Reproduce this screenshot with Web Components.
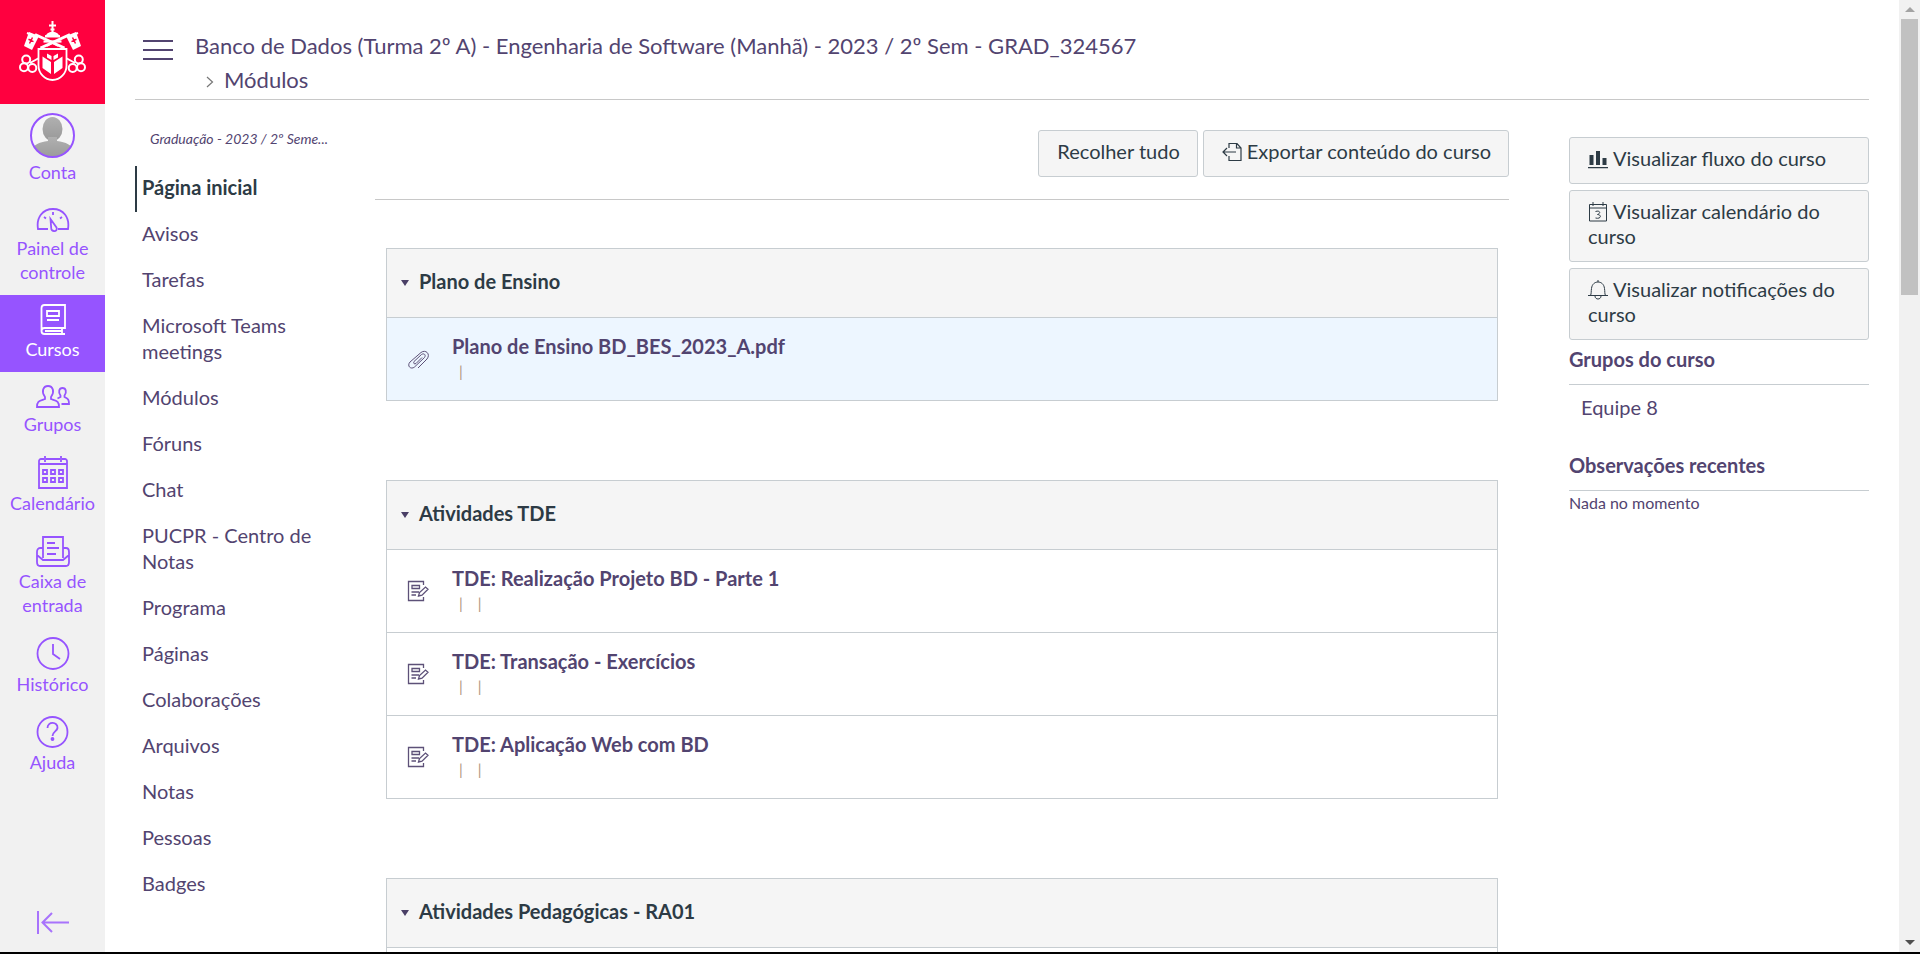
<!DOCTYPE html>
<html lang="pt-BR">
<head>
<meta charset="utf-8">
<title>Banco de Dados: Módulos</title>
<style>
  :root {
    --brand: #9654ff;
    --link: #524470;
    --ink: #2d3b45;
    --line: #c7cdd1;
    --panel: #f5f5f5;
  }
  html, body { margin: 0; height: 100%; overflow: hidden; background: #fff; }
  body { font-family: Lato, "Liberation Sans", sans-serif; font-size: 20px; line-height: 24px; color: var(--ink); }
</style>
</head>
<body>
<course-app></course-app>

<template id="t-app">
  <style>
    :host { display: flex; height: 100vh; box-sizing: border-box; border-bottom: 2px solid #000; overflow: hidden; }
    main { flex: 1; min-width: 0; padding: 0 30px; overflow: hidden; }
    .body { display: grid; grid-template-columns: 210px minmax(0, 1fr) 300px; }
    .content { margin: 30px 60px 0 30px; }
    .toolbar { display: flex; justify-content: flex-end; gap: 5px; padding-bottom: 22px; border-bottom: 1px solid #c8c8c8; }
    .modules { display: flex; flex-direction: column; gap: 79px; padding: 48px 11px 0; }
  </style>
  <global-nav></global-nav>
  <main>
    <course-header></course-header>
    <div class="body">
      <course-menu></course-menu>
      <div class="content">
        <div class="toolbar">
          <canvas-button>Recolher tudo</canvas-button>
          <canvas-button icon="export">Exportar conteúdo do curso</canvas-button>
        </div>
        <div class="modules">
          <course-module name="Plano de Ensino">
            <module-item icon="clip" marks="1" selected>Plano de Ensino BD_BES_2023_A.pdf</module-item>
          </course-module>
          <course-module name="Atividades TDE">
            <module-item icon="task" marks="2">TDE: Realização Projeto BD - Parte 1</module-item>
            <module-item icon="task" marks="2">TDE: Transação - Exercícios</module-item>
            <module-item icon="task" marks="2">TDE: Aplicação Web com BD</module-item>
          </course-module>
          <course-module name="Atividades Pedagógicas - RA01">
            <module-item icon="task" marks="0"></module-item>
          </course-module>
        </div>
      </div>
      <course-aside></course-aside>
    </div>
  </main>
  <page-scrollbar></page-scrollbar>
</template>

<template id="t-nav">
  <style>
    :host { display: flex; flex-direction: column; flex: none; width: 105px; background: #f1f1f1; color: var(--brand); }
    .logo { display: block; background: #ff003f; height: 104px; }
    .logo svg { display: block; }
    ul { list-style: none; margin: 0; padding: 0; flex: 1; }
    .fold { border: 0; background: none; padding: 0; margin-bottom: 16px; color: var(--brand); opacity: .8; }
    .fold svg { display: block; margin: 0 auto; fill: none; stroke: currentColor; stroke-width: 2; }
  </style>
  <a class="logo" href="#" aria-label="PUCPR">
    <svg width="105" height="104" viewBox="0 0 105 104" fill="none" stroke="#fff">
      <path d="M52.500 21v11M49 25.500h7M50.500 29.500h4" stroke-width="2"/>
      <path d="M46 36q0-3.500 6.500-4.500 6.500 1 6.500 4.500zM44.500 36.500h16" fill="#fff" stroke="none"/>
      <path d="M45 36.300h15" stroke-width="2.400"/>
      <path d="M35 34.500L64.500 48M70 34.500L40.500 48" stroke-width="3"/>
      <path d="M43.500 41.500L61.500 41.500" stroke-width="2.200"/>
      <path d="M47 46l5.500-3 5.500 3" stroke-width="1.500"/>
      <g fill="#fff" stroke="none">
        <path d="M29 32l10 4-7 14-8-4z"/><path d="M76 32l-10 4 7 14 8-4z"/>
      </g>
      <path d="M27 33l9 3.500M78 33l-9 3.500" stroke-width="2"/>
      <g stroke="#ff003f" stroke-width="1.500">
        <path d="M32.500 37.500l-3 6M28.500 39.300l5 2.300M72.500 37.500l3 6M76.500 39.300l-5 2.300"/>
      </g>
      <g stroke-width="2">
        <circle cx="26.200" cy="59.500" r="4"/><circle cx="24" cy="67.200" r="4"/><circle cx="32.300" cy="68" r="4"/>
        <circle cx="78.800" cy="59.500" r="4"/><circle cx="81" cy="67.200" r="4"/><circle cx="72.700" cy="68" r="4"/>
        <path d="M30 63l9-5M75 63l-9-5"/>
      </g>
      <path d="M38.500 49h28v16.500a14 14.500 0 0 1-28 0z" fill="#ff003f" stroke-width="1.800"/>
      <path d="M42.500 56.500l8.500 5.500v12l-8.500-6zM62.500 56.500L54 62v12l8.500-6zM47 53.500l4.500 2.500v4l-4.500-2.500zM58 53.500L53.500 56v4l4.500-2.500z" fill="#fff" stroke="none"/>
    </svg>
  </a>
  <ul>
    <nav-item icon="user">Conta</nav-item>
    <nav-item icon="gauge">Painel de controle</nav-item>
    <nav-item icon="book" active>Cursos</nav-item>
    <nav-item icon="people">Grupos</nav-item>
    <nav-item icon="calendar">Calendário</nav-item>
    <nav-item icon="inbox">Caixa de entrada</nav-item>
    <nav-item icon="clock">Histórico</nav-item>
    <nav-item icon="help">Ajuda</nav-item>
  </ul>
  <button class="fold" type="button" aria-label="Minimizar navegação">
    <svg width="34" height="26" viewBox="0 0 34 26"><path d="M2 1v23M6.500 12.500H33M16 3l-9.500 9.500L16 22"/></svg>
  </button>
</template>

<template id="t-nav-item">
  <style>
    :host { display: block; }
    a { display: block; padding: 9px 8px 11px; text-align: center; font-size: 18px; line-height: 24px; color: inherit; text-decoration: none; }
    :host([active]) a { background: var(--brand); color: #fff; }
    svg { display: block; margin: 0 auto 2px; fill: none; stroke: currentColor; stroke-width: 1.800; }
  </style>
  <a href="#"><span class="icon"></span><slot></slot></a>
</template>

<template id="t-header">
  <style>
    :host { display: flex; align-items: flex-start; padding: 29px 0 2px 7px; border-bottom: 1px solid #c8c8c8; }
    button { border: 0; background: none; padding: 10px 0 0; margin-right: 21px; }
    button svg { display: block; }
    ol { list-style: none; margin: 0; padding: 0; font-size: 22px; line-height: 34px; }
    li { display: flex; align-items: center; }
    li svg { margin: 4px 10px 0 11px; }
    a { color: var(--link); text-decoration: none; }
  </style>
  <button type="button" aria-label="Alternar menu do curso">
    <svg width="32" height="24" viewBox="0 0 32 24" fill="none" stroke="#524470" stroke-width="2"><path d="M1 2h30M1 11h30M1 20h30"/></svg>
  </button>
  <nav aria-label="Trilha">
    <ol>
      <li><a href="#">Banco de Dados (Turma 2º A) - Engenharia de Software (Manhã) - 2023 / 2º Sem - GRAD_324567</a></li>
      <li><svg width="8" height="12" viewBox="0 0 8 12" fill="none" stroke="#777" stroke-width="1.200"><path d="M1 1l5.500 5L1 11"/></svg><a href="#">Módulos</a></li>
    </ol>
  </nav>
</template>

<template id="t-menu">
  <style>
    :host { display: block; padding-top: 30px; }
    p { margin: 0 0 18px 15px; font-size: 14px; line-height: 18px; font-style: italic; color: var(--link); }
    ul { list-style: none; margin: 0; padding: 0; }
    a { display: block; padding: 8px 5px 12px; border-left: 2px solid transparent; line-height: 26px; color: var(--link); text-decoration: none; }
    a.on { color: var(--ink); font-weight: 700; border-color: var(--ink); }
  </style>
  <p>Graduação - 2023 / 2º Seme...</p>
  <nav aria-label="Curso"><ul></ul></nav>
</template>

<template id="t-button">
  <style>
    :host { display: block; }
    button { display: block; width: 100%; padding: 8px 17px 12px 18px; font: inherit; line-height: 25px; text-align: left; color: var(--ink); background: var(--panel); border: 1px solid var(--line); border-radius: 3px; }
    svg { width: 20px; height: 20px; vertical-align: -3px; margin-right: 5px; fill: none; stroke: currentColor; }
  </style>
  <button type="button"><span class="icon"></span><slot></slot></button>
</template>

<template id="t-module">
  <style>
    :host { display: block; border: 1px solid var(--line); }
    h2 { margin: 0; background: var(--panel); }
    button { display: flex; align-items: center; gap: 10px; width: 100%; padding: 20px 14px 24px; border: 0; background: none; font: 700 20px/24px Lato, "Liberation Sans", sans-serif; color: var(--ink); text-align: left; }
    i { border: 4px solid transparent; border-top: 6px solid #4a3f66; border-bottom: 0; margin-top: 3px; }
  </style>
  <h2><button type="button" aria-expanded="true"><i></i><span></span></button></h2>
  <slot></slot>
</template>

<template id="t-item">
  <style>
    :host { display: flex; align-items: center; gap: 23px; padding: 16px 20px 16px; border-top: 1px solid var(--line); }
    :host([selected]) { background: #edf6ff; }
    svg { display: block; fill: none; stroke: #5d5178; stroke-width: 1.300; }
    a { display: block; font-weight: 700; color: var(--link); text-decoration: none; }
    .marks { display: flex; gap: 15px; padding-left: 7px; font-size: 15px; line-height: 26px; color: #b0947e; }
  </style>
  <span class="icon"></span>
  <div><a href="#"><slot></slot></a><div class="marks"></div></div>
</template>

<template id="t-aside">
  <style>
    :host { display: block; padding-top: 37px; color: var(--link); }
    .actions { display: flex; flex-direction: column; gap: 6px; }
    h2 { margin: 7px 0 0; padding-bottom: 13px; border-bottom: 1px solid var(--line); font-size: 20px; line-height: 24px; }
    ul { list-style: none; margin: 10px 0 33px; padding: 0 12px; }
    a { color: inherit; text-decoration: none; }
    h2.recent { margin-top: 34px; }
    p { margin: 2px 0 0; font-size: 16px; line-height: 20px; }
  </style>
  <div class="actions">
    <canvas-button icon="bars">Visualizar fluxo do curso</canvas-button>
    <canvas-button icon="day">Visualizar calendário do curso</canvas-button>
    <canvas-button icon="bell">Visualizar notificações do curso</canvas-button>
  </div>
  <h2>Grupos do curso</h2>
  <ul><li><a href="#">Equipe 8</a></li></ul>
  <h2 class="recent">Observações recentes</h2>
  <p>Nada no momento</p>
</template>

<template id="t-scroll">
  <style>
    :host { display: flex; flex-direction: column; align-items: center; flex: none; width: 21px; box-sizing: border-box; padding: 7px 0; background: #f1f1f1; }
    .up, .down { border: 5px solid transparent; }
    .up { border-top: 0; border-bottom: 5px solid #a3a3a3; }
    .down { border-bottom: 0; border-top: 5px solid #505050; }
    .track { flex: 1; padding-top: 7px; }
    .thumb { width: 17px; height: 30%; background: #c1c1c1; }
  </style>
  <span class="up"></span><div class="track"><div class="thumb"></div></div><span class="down"></span>
</template>

<script>
const ICONS = {
  user: `<svg width="47" height="45" viewBox="0 0 47 45"><defs><clipPath id="c"><circle cx="23.500" cy="22.500" r="21.500"/></clipPath><linearGradient id="g" x2="0" y2="1"><stop stop-color="#b0b0b0"/><stop offset="1" stop-color="#999"/></linearGradient></defs><circle cx="23.500" cy="22.500" r="21.500" fill="#f6f6f6" stroke="none"/><g clip-path="url(#c)" fill="url(#g)" stroke="none"><ellipse cx="23.500" cy="16" rx="10" ry="12"/><path d="M19 24h9v4c9 1 15 4 17 10v8H2v-8c2-6 8-9 17-10z"/></g><circle cx="23.500" cy="22.500" r="21.500" stroke-width="2"/></svg>`,
  gauge: `<svg width="34" height="30" viewBox="0 0 34 30"><path d="M12 25H2c-2-12 5-20 15-20s17 8 15 20H22M17 8v3M8 13l2 1.500M26 13l-2 1.500M14.500 15l6 8.500c1 2.500-1 4-2.500 3.500-1.500 0-2.800-1-2.800-3z"/></svg>`,
  book: `<svg width="26" height="31" viewBox="0 0 26 31"><path d="M4.500 1H25v23H4.500C.5 24 .5 30 4.500 30H25M1.500 27V4c0-2 1-3 3-3M22 24v6M5 27h17M7 7h12v5H7zM7 16h12"/></svg>`,
  people: `<svg width="34" height="29" viewBox="0 0 34 29"><path d="M1 26c0-6 2-6 8-8v-2C5 11 7 5 12 5s7 6 3 11v2c6 2 8 2 8 8zM25.500 23H33c0-5-1-5-4.500-7v-1.500C31 11 30 7 26.500 7S22 11 24.500 14.500V16l-3 1.500"/></svg>`,
  calendar: `<svg width="30" height="33" viewBox="0 0 30 33"><path d="M6 3H3C2 3 1 4 1 5v27h28V5c0-1-1-2-2-2h-3M8 3h14M7 0v6M23 0v6M1 8h28M5 14h4v4H5zM13 14h4v4h-4zM21 14h4v4h-4zM5 22h4v4H5zM13 22h4v4h-4zM21 22h4v4h-4z"/></svg>`,
  inbox: `<svg width="34" height="32" viewBox="0 0 34 32"><path d="M7 23V2h20v21M7 13H4c-2 0-3 2-3 4v10c0 2 1 4 3 4h26c2 0 3-2 3-4V17c0-2-1-4-3-4h-3M1 20l6 5h20l6-5M11 8h8M11 13h12M11 19h9"/></svg>`,
  clock: `<svg width="34" height="33" viewBox="0 0 34 33"><circle cx="17" cy="16.500" r="15.500"/><path d="M17 7v10l7 5"/></svg>`,
  help: `<svg width="34" height="32" viewBox="0 0 34 32"><circle cx="16.500" cy="16" r="15"/><path d="M11.500 12c0-7 10.500-6.500 10 0-.5 3.500-5 3.500-5 8"/><circle cx="16.500" cy="23" r="1"/></svg>`,
  export: `<svg viewBox="0 0 20 20"><path d="M7 6V1.500h8L19 6v12.500H7V14M14.500 1.500V6H19M14 10H1M5 6l-4 4 4 4" stroke-width="1.200"/></svg>`,
  bars: `<svg viewBox="0 0 20 20"><path d="M1.500 6h4v10h-4zM8 2h4v14H8zM14.500 9h4v7h-4zM0 18h20v1.200H0z" fill="currentColor" stroke="none"/></svg>`,
  day: `<svg viewBox="0 0 20 20"><path d="M1.500 2.500h17v16.500h-17zM1.500 6h17M5 0v4M15 0v4M7.500 9.500c4-1.500 6 1.500 2 3 5 .5 3 5-2 3.500"/></svg>`,
  bell: `<svg viewBox="0 0 20 20"><path d="M0 15.500h20M2.500 15.500c1-2 .5-4 1-7C4 4 7 2 10 2s6 2 6.500 6.500c.5 3 0 5 1 7M10 0v2M7 16c0 4 6 4 6 0"/></svg>`,
  clip: `<svg width="22" height="22" viewBox="0 0 22 22"><path d="M11 20l9-9c4-5-1.500-10-6-6.500L3 14c-3.500 4 1 8 4.500 5l10-9.500c2-3-1-4.500-3-3L7 13.500c-1 2 .5 3 2 2L15 9.500" stroke-width="1"/></svg>`,
  task: `<svg width="22" height="22" viewBox="0 0 22 22"><path d="M16.500 5V1.500h-15v19h15V17M5 5.500h7.500v3H5zM4.500 12H12M4.500 15H9M11.500 16l1-3.500L18.500 7l2.500 2.200-6 6z"/></svg>`
};

class Base extends HTMLElement {
  constructor(id) {
    super();
    this.attachShadow({ mode: 'open' }).append(document.getElementById(id).content.cloneNode(true));
  }
  find(selector) { return this.shadowRoot.querySelector(selector); }
  drawIcon() {
    const name = this.getAttribute('icon');
    if (name) this.find('.icon').innerHTML = ICONS[name];
  }
}

const define = (tag, id, connect = () => {}) => customElements.define(tag, class extends Base {
  constructor() { super(id); }
  connectedCallback() { connect(this); }
});

define('nav-item', 't-nav-item', el => { el.setAttribute('role', 'listitem'); el.drawIcon(); });
define('canvas-button', 't-button', el => el.drawIcon());
define('course-module', 't-module', el => { el.find('span').textContent = el.getAttribute('name'); });
define('module-item', 't-item', el => {
  el.drawIcon();
  el.find('.marks').innerHTML = '<span>|</span>'.repeat(Number(el.getAttribute('marks')));
});
define('course-menu', 't-menu', el => {
  const entries = ['Página inicial', 'Avisos', 'Tarefas', 'Microsoft Teams meetings', 'Módulos', 'Fóruns', 'Chat',
    'PUCPR - Centro de Notas', 'Programa', 'Páginas', 'Colaborações', 'Arquivos', 'Notas', 'Pessoas', 'Badges'];
  el.find('ul').innerHTML = entries.map((text, i) => `<li><a href="#"${i ? '' : ' class="on"'}>${text}</a></li>`).join('');
});
define('course-header', 't-header');
define('course-aside', 't-aside');
define('page-scrollbar', 't-scroll');
define('global-nav', 't-nav');
define('course-app', 't-app');
</script>
</body>
</html>
